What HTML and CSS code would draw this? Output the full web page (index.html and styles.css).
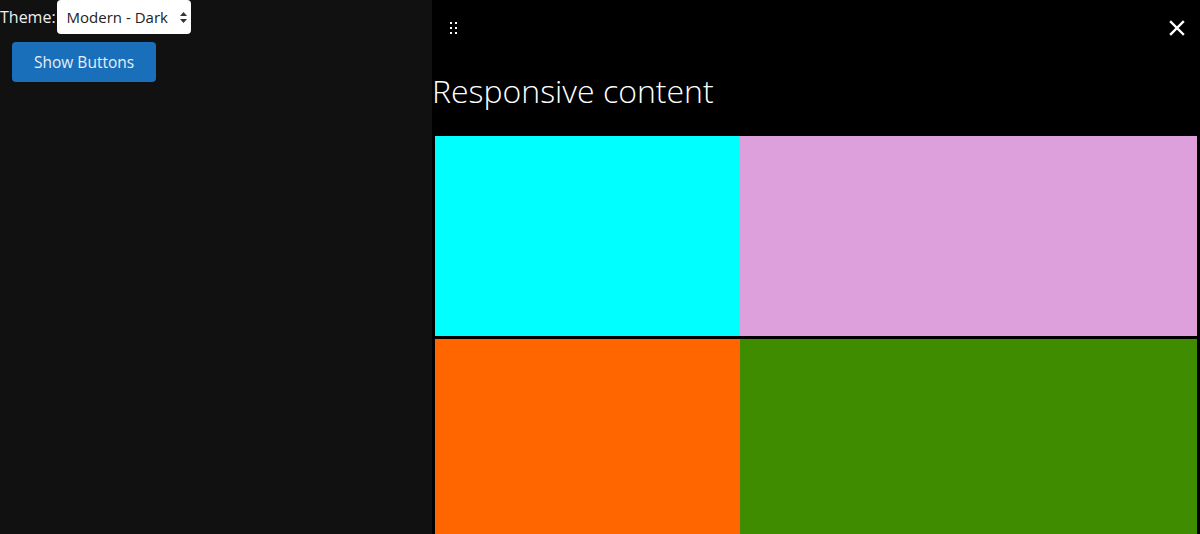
FILE: index.html
```html
<!DOCTYPE html>
<html lang="en">
<head>
<meta charset="UTF-8">
<meta name="viewport" content="width=device-width, initial-scale=1.0">
<title>Responsive content</title>
<link rel="stylesheet" href="styles.css">
</head>
<body>
<div class="page">
  <div class="sidebar">
    <div class="theme-row">
      <label for="themeSelect">Theme:</label>
      <div class="select-wrap">
        <select id="themeSelect" class="theme-select">
          <option>Modern - Dark</option>
          <option>Modern - Light</option>
        </select>
        <svg class="select-arrows" width="7" height="11" viewBox="0 0 7 11">
          <path d="M3.5 0 L7 4 H0 Z M3.5 11 L0 7 H7 Z" fill="#333"/>
        </svg>
      </div>
    </div>
    <button class="btn btn-primary">Show Buttons</button>
  </div>

  <div class="panel">
    <div class="panel-header">
      <svg class="drag-handle" width="10" height="14" viewBox="0 0 10 14">
        <rect x="1" y="1" width="2" height="2" fill="#fff"/>
        <rect x="6" y="1" width="2" height="2" fill="#fff"/>
        <rect x="1" y="6" width="2" height="2" fill="#fff"/>
        <rect x="6" y="6" width="2" height="2" fill="#fff"/>
        <rect x="1" y="11" width="2" height="2" fill="#fff"/>
        <rect x="6" y="11" width="2" height="2" fill="#fff"/>
      </svg>
      <svg class="close-btn" width="16" height="16" viewBox="0 0 16 16">
        <path d="M2 2 L14 14 M14 2 L2 14" stroke="#fff" stroke-width="2.4" stroke-linecap="square"/>
      </svg>
    </div>
    <h1 class="panel-title">Responsive content</h1>
    <div class="grid">
      <div class="cell cyan"></div>
      <div class="cell plum"></div>
      <div class="cell orange"></div>
      <div class="cell green"></div>
    </div>
  </div>
</div>
</body>
</html>
```
FILE: styles.css
```css
html, body {
    margin: 0;
    height: 100%;
    background-color: #111111;
    font-family: "Open Sans", "Noto Sans", sans-serif;
    overflow: hidden;
}

.page {
    display: flex;
    height: 100%;
}

.sidebar {
    width: 432px;
    flex-shrink: 0;
}

.theme-row {
    display: flex;
    align-items: center;
    height: 34px;
    color: #eeeeee;
    font-size: 16px;
}

.theme-row label {
    margin-right: 1px;
}

.select-wrap {
    position: relative;
}

.theme-select {
    appearance: none;
    -webkit-appearance: none;
    width: 134px;
    height: 34px;
    padding: 0 10px;
    border: none;
    border-radius: 4px;
    background-color: #fff;
    color: #222;
    font-family: "Open Sans", "Noto Sans", sans-serif;
    font-size: 15px;
    outline: none;
}

.select-arrows {
    position: absolute;
    right: 4px;
    top: 12px;
    pointer-events: none;
}

.btn {
    margin: 8px 0 0 12px;
    height: 40px;
    padding: 0 22px;
    border: none;
    border-radius: 4px;
    font-family: "Open Sans", "Noto Sans", sans-serif;
    font-size: 15.5px;
    cursor: pointer;
}

.btn-primary {
    background-color: #1a6fba;
    color: #e6eef6;
}

.panel {
    flex: 1;
    background-color: #000;
    overflow: hidden;
}

.panel-header {
    display: flex;
    justify-content: space-between;
    align-items: center;
    height: 56px;
    padding: 0 15px 0 17px;
}

.panel-title {
    margin: 14px 0 24px 0;
    color: #fff;
    font-size: 32px;
    font-weight: 300;
    line-height: 42px;
}

.grid {
    display: grid;
    grid-template-columns: 40% 60%;
    grid-template-rows: 200px 200px;
    row-gap: 3px;
    padding: 0 3px;
}

.cyan { background-color: #00ffff; }
.plum { background-color: #dda0dd; }
.orange { background-color: #ff6600; }
.green { background-color: #408c00; }
```
